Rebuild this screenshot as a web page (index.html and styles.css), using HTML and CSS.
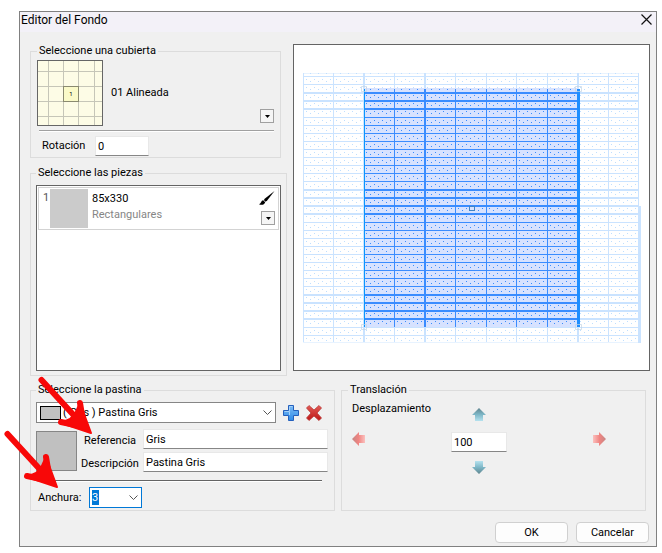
FILE: index.html
```
<!DOCTYPE html>
<html lang="es">
<head>
    <meta charset="UTF-8">
    <meta name="viewport" content="width=device-width, initial-scale=1.0">
    <title>Editor del Fondo</title>
    <link rel="stylesheet" href="styles.css">
</head>
<body>

    <div class="window">
        <header class="titlebar">
            <h1>Editor del Fondo</h1>
            <button class="close" aria-label="Cerrar">
                <svg width="11" height="11" viewBox="0 0 11 11"><path d="M0.5 0.5L10.5 10.5M10.5 0.5L0.5 10.5" stroke="#111" stroke-width="1.2"/></svg>
            </button>
        </header>

        <main>
            <div class="upper">
                <div class="side">
                    <fieldset class="cover">
                        <legend>Seleccione una cubierta</legend>
                        <div class="cover-row">
                            <svg class="thumb" width="66" height="66" viewBox="0 0 66 66">
                                <rect x="0.5" y="0.5" width="65" height="65" fill="#fdfce6" stroke="#666"/>
                                <rect x="27" y="27" width="14" height="14" fill="#fafac8"/>
                                <path d="M11.5 1V65M26.5 1V65M41.5 1V65M57.5 1V65M1 11.5H65M1 26.5H65M1 41.5H65M1 56.5H65" stroke="#c6c6b8"/>
                                <rect x="26.5" y="26.5" width="15" height="15" fill="none" stroke="#8a8a70"/>
                                <text x="34" y="36" font-size="6" text-anchor="middle">1</text>
                            </svg>
                            <span class="cover-name">01 Alineada</span>
                            <button class="drop" aria-label="Elegir cubierta"><svg width="5" height="3" viewBox="0 0 5 3"><path d="M0 0H5L2.5 3Z"/></svg></button>
                        </div>
                        <hr>
                        <div class="rotation">
                            <label for="rotacion">Rotación</label>
                            <input type="text" id="rotacion" value="0">
                        </div>
                    </fieldset>

                    <fieldset class="pieces">
                        <legend>Seleccione las piezas</legend>
                        <ul class="list">
                            <li class="piece">
                                <span class="number">1</span>
                                <span class="piece-color"></span>
                                <div class="piece-text">
                                    <span>85x330</span>
                                    <span class="muted">Rectangulares</span>
                                </div>
                                <div class="piece-tools">
                                    <button class="brush" aria-label="Pintar">
                                        <svg width="16" height="15" viewBox="0 0 16 15"><path d="M15.5 0L6 7.5L4.8 9L6.6 10.8L8.2 9.4Z"/><path d="M4.2 9.2C2 9.6 2.6 12 0 13.2C2.6 14.4 5.6 13.6 6.2 11.2Z"/></svg>
                                    </button>
                                    <button class="drop" aria-label="Elegir pieza"><svg width="5" height="3" viewBox="0 0 5 3"><path d="M0 0H5L2.5 3Z"/></svg></button>
                                </div>
                            </li>
                        </ul>
                    </fieldset>
                </div>

                <div class="preview">
                    <svg id="pattern" viewBox="0 0 355 325"></svg>
                </div>
            </div>

            <div class="lower">
                <div class="grout">
                    <fieldset>
                        <legend>Seleccione la pastina</legend>
                        <div class="grout-pick">
                            <div class="combo">
                                <span class="combo-color"></span>
                                <select aria-label="Pastina">
                                    <option>( Gris ) Pastina Gris</option>
                                </select>
                                <svg class="chevron" width="9" height="5" viewBox="0 0 9 5"><path d="M0.5 0.5L4.5 4.5L8.5 0.5" fill="none" stroke="#555"/></svg>
                            </div>
                            <button class="icon" aria-label="Añadir">
                                <svg width="16" height="16" viewBox="0 0 16 16">
                                    <defs><linearGradient id="blue" x2="0" y2="1"><stop offset="0" stop-color="#7dbcf5"/><stop offset="1" stop-color="#2f8ce8"/></linearGradient></defs>
                                    <path d="M5.5 0.5H10.5V5.5H15.5V10.5H10.5V15.5H5.5V10.5H0.5V5.5H5.5Z" fill="url(#blue)" stroke="#2560bd"/>
                                    <path d="M6.5 10V6.5H1.5M6.5 6V1.5H9.5" fill="none" stroke="#a5d2fa"/>
                                </svg>
                            </button>
                            <button class="icon" aria-label="Eliminar">
                                <svg width="16" height="16" viewBox="0 0 16 16">
                                    <defs><linearGradient id="red" x2="0" y2="1"><stop offset="0" stop-color="#e25b55"/><stop offset="1" stop-color="#bd1616"/></linearGradient></defs>
                                    <path d="M3 0.5L8 5L13 0.5L15.5 3L11 8L15.5 13L13 15.5L8 11L3 15.5L0.5 13L5 8L0.5 3Z" fill="url(#red)" stroke="#b93a38" stroke-width="0.8"/>
                                </svg>
                            </button>
                        </div>
                        <div class="grout-data">
                            <span class="grout-color"></span>
                            <label for="referencia">Referencia</label>
                            <input type="text" id="referencia" value="Gris">
                            <label for="descripcion">Descripción</label>
                            <input type="text" id="descripcion" value="Pastina Gris">
                        </div>
                        <hr>
                        <div class="grout-width">
                            <label for="anchura">Anchura:</label>
                            <div class="combo focused">
                                <select id="anchura">
                                    <option>3</option>
                                </select>
                                <svg class="chevron" width="9" height="5" viewBox="0 0 9 5"><path d="M0.5 0.5L4.5 4.5L8.5 0.5" fill="none" stroke="#555"/></svg>
                            </div>
                        </div>
                    </fieldset>
                    <svg class="pointers" width="100" height="120" viewBox="0 0 100 120">
                        <defs>
                            <g id="pointer" fill="#f80808" stroke="#f80808" stroke-linejoin="round" stroke-linecap="round">
                                <path d="M-50.500 -54L-12 -12" stroke-width="6"/>
                                <path d="M-12 -31L-9 -13M-31 -12L-12 -8" stroke-width="6"/>
                                <path d="M-17 -20L-12 -31L-1 -1L-31 -11L-22 -15Z" stroke-width="2"/>
                            </g>
                        </defs>
                        <use href="#pointer" x="92" y="63"/>
                        <use href="#pointer" x="58" y="117"/>
                    </svg>
                </div>

                <fieldset class="move">
                    <legend>Translación</legend>
                    <div class="move-grid">
                        <label for="desplazamiento">Desplazamiento</label>
                        <button class="icon up" aria-label="Arriba">
                            <svg width="14" height="14" viewBox="0 0 14 14">
                                <defs><linearGradient id="teal" x2="0" y2="1"><stop offset="0" stop-color="#60858f"/><stop offset="0.5" stop-color="#7db6c6"/><stop offset="1" stop-color="#b5e2ef"/></linearGradient></defs>
                                <path d="M7 0L14 7H11V13H3V7H0Z" fill="url(#teal)"/>
                            </svg>
                        </button>
                        <button class="icon left" aria-label="Izquierda">
                            <svg width="14" height="14" viewBox="0 0 14 14">
                                <defs><linearGradient id="pink"><stop offset="0" stop-color="#c58583"/><stop offset="0.5" stop-color="#f08582"/><stop offset="1" stop-color="#fbc0be"/></linearGradient></defs>
                                <path d="M0 7L7 0V3H13V11H7V14Z" fill="url(#pink)"/>
                            </svg>
                        </button>
                        <input type="text" id="desplazamiento" value="100">
                        <button class="icon right" aria-label="Derecha">
                            <svg width="14" height="14" viewBox="0 0 14 14"><path d="M0 7L7 0V3H13V11H7V14Z" fill="url(#pink)" transform="rotate(180 7 7)"/></svg>
                        </button>
                        <button class="icon down" aria-label="Abajo">
                            <svg width="14" height="14" viewBox="0 0 14 14"><path d="M7 0L14 7H11V13H3V7H0Z" fill="url(#teal)" transform="rotate(180 7 7)"/></svg>
                        </button>
                    </div>
                </fieldset>
            </div>

            <footer>
                <button class="action">OK</button>
                <button class="action">Cancelar</button>
            </footer>
        </main>
    </div>

    <script>
        const pattern = document.getElementById('pattern');
        const columns = [9, 39, 69, 100, 130, 161, 192, 222, 253, 283, 314, 344];
        const wideColumns = [69, 130, 283];
        const gridTop = 28;
        const gridBottom = 298;
        let shapes = '';

        function rect(x, y, w, h, color) {
            shapes += `<rect x="${x}" y="${y}" width="${w}" height="${h}" fill="${color}"/>`;
        }

        // Draws joints and dots inside the given area
        function drawTiles(x1, y1, x2, y2, line, dot) {
            for (let i = 0; i < 33; i++) {
                const y = 31 + i * 8 + Math.floor((i + 8) / 13);
                const wide = i > 1 && i % 13 >= 1 && i % 13 <= 4;
                if (y >= y1 && y < y2) {
                    rect(x1, y, x2 - x1, wide ? 2 : 1, line);
                }
            }
            columns.forEach(function (x, c) {
                if (x >= x1 && x < x2) {
                    rect(x, y1, wideColumns.includes(x) ? 2 : 1, y2 - y1, line);
                }
                if (x < x1 - 1 || x >= x2 - 3) return;
                for (let i = -1; i < 33; i++) {
                    const y = 31 + i * 8 + Math.floor((i + 8) / 13);
                    for (let k = 0; k < 7; k++) {
                        const dy = y + (k % 2 ? 5 : 3);
                        if (dy >= y1 && dy < y2 && x + 3 + k * 4 < x2) {
                            rect(x + 3 + k * 4, dy, 1, 1, dot);
                        }
                    }
                }
            });
        }

        rect(9, gridTop, 335, 1, '#e8f3ff');
        drawTiles(9, gridTop, 345, gridBottom, '#cae3ff', '#bfdfff');
        rect(9, gridBottom - 1, 336, 1, '#e8f3ff');
        rect(344, 161, 3, 137, '#cae3ff');

        // Selected area
        rect(70, 43, 215, 239, '#d7e2ff');
        drawTiles(70, 44, 285, 282, '#3a8cff', '#3a8cff');
        rect(70, 44, 1, 238, '#0a96ff');
        rect(283, 44, 3, 238, '#1e8eff');

        // Handles
        shapes += '<path d="M67.500 41.500H72.500V46.500H67.500ZM67.500 279.500H72.500V284.500H67.500ZM281.500 279.500H287.500V284.500H281.500ZM281.500 41.500H287.500V46.500H281.500Z" fill="none" stroke="#c3d4e4" stroke-opacity="0.7"/>';
        shapes += '<rect x="175.500" y="161.500" width="5" height="4" fill="#d7e2ff" stroke="#3f85c8"/>';
        pattern.innerHTML = shapes;
    </script>

</body>
</html>
```
FILE: styles.css
```
* {
    box-sizing: border-box;
}

body {
    margin: 0;
    padding: 11px 5px 6px 19px;
    background-color: #fff;
    color: #000;
    font-family: Roboto, "Liberation Sans", sans-serif;
    font-size: 11px;
    line-height: 14px;
}

button,
input,
select {
    font: inherit;
    color: inherit;
}

button {
    padding: 0;
    border: none;
    background: none;
}

svg {
    display: block;
}

.window {
    border: 1px solid #808080;
    background-color: #f0f0f0;
}

.titlebar {
    display: flex;
    justify-content: space-between;
    align-items: flex-start;
    height: 20px;
    padding: 1px 4px 0 1px;
    background-color: #f3f1f8;
}

.titlebar h1 {
    margin: 0;
    font-size: 12px;
    font-weight: normal;
}

.close {
    padding-top: 1px;
}

main {
    padding: 12px 6px 3px 10px;
}

fieldset {
    min-width: 0;
    margin: 0;
    padding: 0 6px;
    border: 1px solid #dcdcdc;
}

legend {
    padding: 0 2px;
}

hr {
    margin: 0;
    border: none;
    border-top: 1px solid #a0a0a0;
    border-bottom: 1px solid #fff;
}

input {
    height: 20px;
    padding: 0 2px;
    border: 1px solid #e8e8e8;
    border-bottom-color: #868686;
    background-color: #fff;
}

.upper {
    display: flex;
    gap: 6px;
}

.side {
    width: 257px;
}

.cover {
    margin-right: 6px;
    padding: 2px 6px 1px;
}

.cover-row {
    display: flex;
    align-items: center;
    margin-bottom: 4px;
}

.cover-name {
    flex: 1;
    margin-left: 8px;
}

.drop {
    display: flex;
    justify-content: center;
    align-items: center;
    width: 14px;
    height: 14px;
    border: 1px solid #a0a0a0;
    background-color: #f5f5f5;
}

.cover-row .drop {
    align-self: flex-end;
    margin-bottom: 3px;
}

.cover hr {
    margin-left: 2px;
}

.rotation {
    display: flex;
    align-items: center;
    gap: 8px;
    padding: 4px 0 0 5px;
}

.rotation label {
    width: 45px;
}

.rotation input {
    width: 54px;
}

.pieces {
    margin-top: 8px;
    padding: 5px 5px 4px;
}

.list {
    min-height: 186px;
    margin: 0;
    padding: 1px;
    border: 1px solid #646464;
    background-color: #fff;
    list-style: none;
}

.piece {
    display: flex;
    height: 43px;
    padding: 1px 3px 1px 4px;
    border: 1px solid #d3d3d3;
}

.number {
    width: 7px;
    padding-top: 2px;
    color: #555;
}

.piece-color {
    width: 38px;
    background-color: #cbcbcb;
}

.piece-text {
    display: flex;
    flex: 1;
    flex-direction: column;
    gap: 2px;
    padding: 3px 0 0 4px;
}

.muted {
    color: #868686;
}

.piece-tools {
    display: flex;
    flex-direction: column;
    align-items: flex-end;
    gap: 5px;
    padding-top: 2px;
}

.preview {
    flex: 1;
    align-self: flex-start;
    border: 1px solid #646464;
    background-color: #fff;
}

.lower {
    display: grid;
    grid-template-columns: 1fr 1fr;
    gap: 6px;
    margin: 7px 4px 0 0;
}

.grout {
    position: relative;
}

.grout fieldset {
    padding: 5px 6px 2px 5px;
}

.grout-pick {
    display: flex;
    align-items: center;
    gap: 7px;
    padding-right: 6px;
}

.combo {
    position: relative;
    flex: 1;
}

.combo select {
    display: block;
    width: 100%;
    height: 21px;
    padding: 0 2px 0 26px;
    border: 1px solid #868686;
    border-radius: 0;
    background-color: #fff;
    appearance: none;
}

.combo-color {
    position: absolute;
    top: 4px;
    left: 4px;
    width: 21px;
    height: 14px;
    border: 1px solid #000;
    background-color: #c0c0c0;
}

.chevron {
    position: absolute;
    top: 8px;
    right: 4px;
}

.grout-data {
    display: grid;
    grid-template-columns: 41px 62px 1fr;
    gap: 3px 2px;
    align-items: center;
    margin: 6px 0 8px;
}

.grout-data label {
    padding-top: 3px;
    text-align: center;
}

.grout-color {
    grid-row: 1 / 3;
    height: 40px;
    border: 1px solid #868686;
    background-color: #c0c0c0;
}

.grout hr {
    margin: 0 6px 0 2px;
    border-top-color: #646464;
}

.grout-width {
    display: flex;
    align-items: center;
    gap: 4px;
    padding: 5px 0 0 2px;
}

.grout-width label {
    width: 47px;
}

.combo.focused {
    flex: none;
    width: 53px;
}

.combo.focused select {
    padding-left: 2px;
    border-color: #0078d7;
    background: linear-gradient(#0078d7, #0078d7) 2px 2px / 7px 15px no-repeat #fff;
    color: #fff;
}

.pointers {
    position: absolute;
    top: -12px;
    left: -30px;
    pointer-events: none;
}

.move-grid {
    display: grid;
    grid-template-columns: 1fr 56px 1fr;
    grid-template-rows: 25px 20px 19px;
    row-gap: 5px;
    padding: 5px 33px 0 4px;
}

.up,
.down {
    grid-column: 2;
    justify-self: center;
}

.up {
    align-self: center;
}

.left,
.right {
    align-self: start;
}

.left {
    grid-column: 1;
    justify-self: start;
}

.right {
    grid-column: 3;
    justify-self: end;
}

footer {
    display: flex;
    justify-content: flex-end;
    gap: 8px;
    margin-top: 11px;
    padding-right: 1px;
}

.action {
    width: 73px;
    height: 21px;
    border: 1px solid #d0d0d0;
    border-radius: 4px;
    background-color: #fdfdfd;
}
```
